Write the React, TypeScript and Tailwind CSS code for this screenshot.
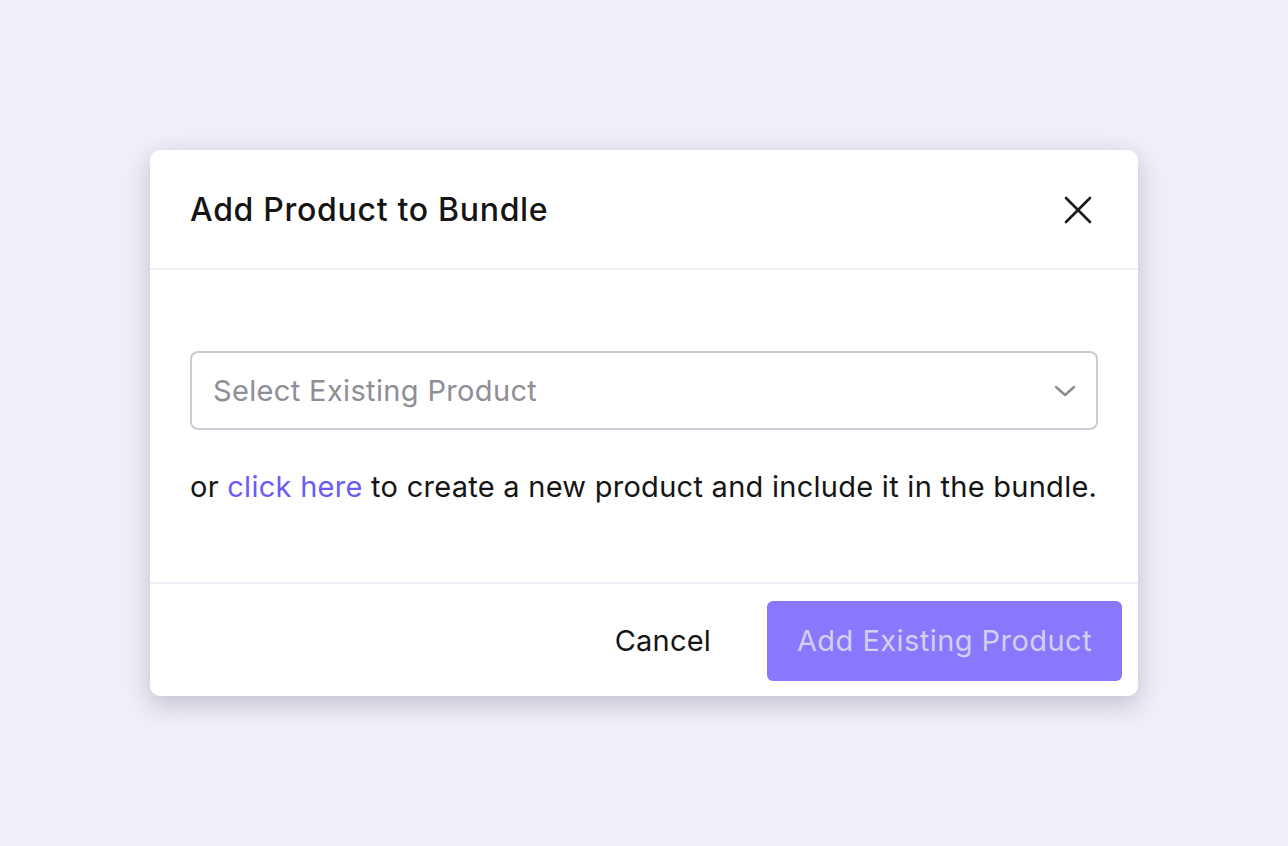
import React from "react";

export default function App() {
  return (
    <div
      className="w-[1288px] h-[846px] bg-[#efeff8] flex items-center justify-center"
      style={{ fontFamily: "Inter, 'Noto Sans', sans-serif" }}
    >
      <div className="w-[988px] h-[546px] bg-white rounded-[10px] shadow-[0_8px_24px_rgba(70,70,100,0.28)] flex flex-col">
        <div className="h-[120px] shrink-0 flex items-center justify-between pl-[40px] pr-[44px] pt-[2px] border-b-2 border-[#efeff8]">
          <h1 className="text-[32px] font-medium text-[#151515] tracking-[0.7px] leading-none">Add Product to Bundle</h1>
          <svg width="32" height="32" viewBox="0 0 32 32" fill="none" stroke="#1a1a1a" strokeWidth="2.6" strokeLinecap="round">
            <path d="M4 4L28 28M28 4L4 28" />
          </svg>
        </div>
        <div className="flex-1 px-[40px] pt-[81px] border-b-2 border-[#efeff8]">
          <div className="h-[79px] border-2 border-[#cbcbd6] rounded-[8px] flex items-center justify-between pl-[21px] pr-[20px]">
            <span className="text-[29px] text-[#8e8e96] tracking-[0.35px]">Select Existing Product</span>
            <svg width="22" height="14" viewBox="0 0 22 14" fill="none" stroke="#8a8a92" strokeWidth="2.4" strokeLinecap="round" strokeLinejoin="round">
              <path d="M2 3L11 11L20 3" />
            </svg>
          </div>
          <p className="mt-[38px] text-[29px] leading-[38px] text-[#151515] tracking-[0.27px] whitespace-nowrap">
            or <span className="text-[#6b5cf7]">click here</span> to create a new product and include it in the bundle.
          </p>
        </div>
        <div className="h-[112px] shrink-0 flex items-center justify-end pr-[16px] pt-[1px] gap-[56px]">
          <span className="text-[29px] text-[#151515] tracking-[0.2px]">Cancel</span>
          <div className="h-[80px] w-[355px] rounded-[6px] bg-[#8878fd] flex items-center justify-center">
            <span className="text-[29px] text-[#d3cfee] tracking-[0.45px]">Add Existing Product</span>
          </div>
        </div>
      </div>
    </div>
  );
}
